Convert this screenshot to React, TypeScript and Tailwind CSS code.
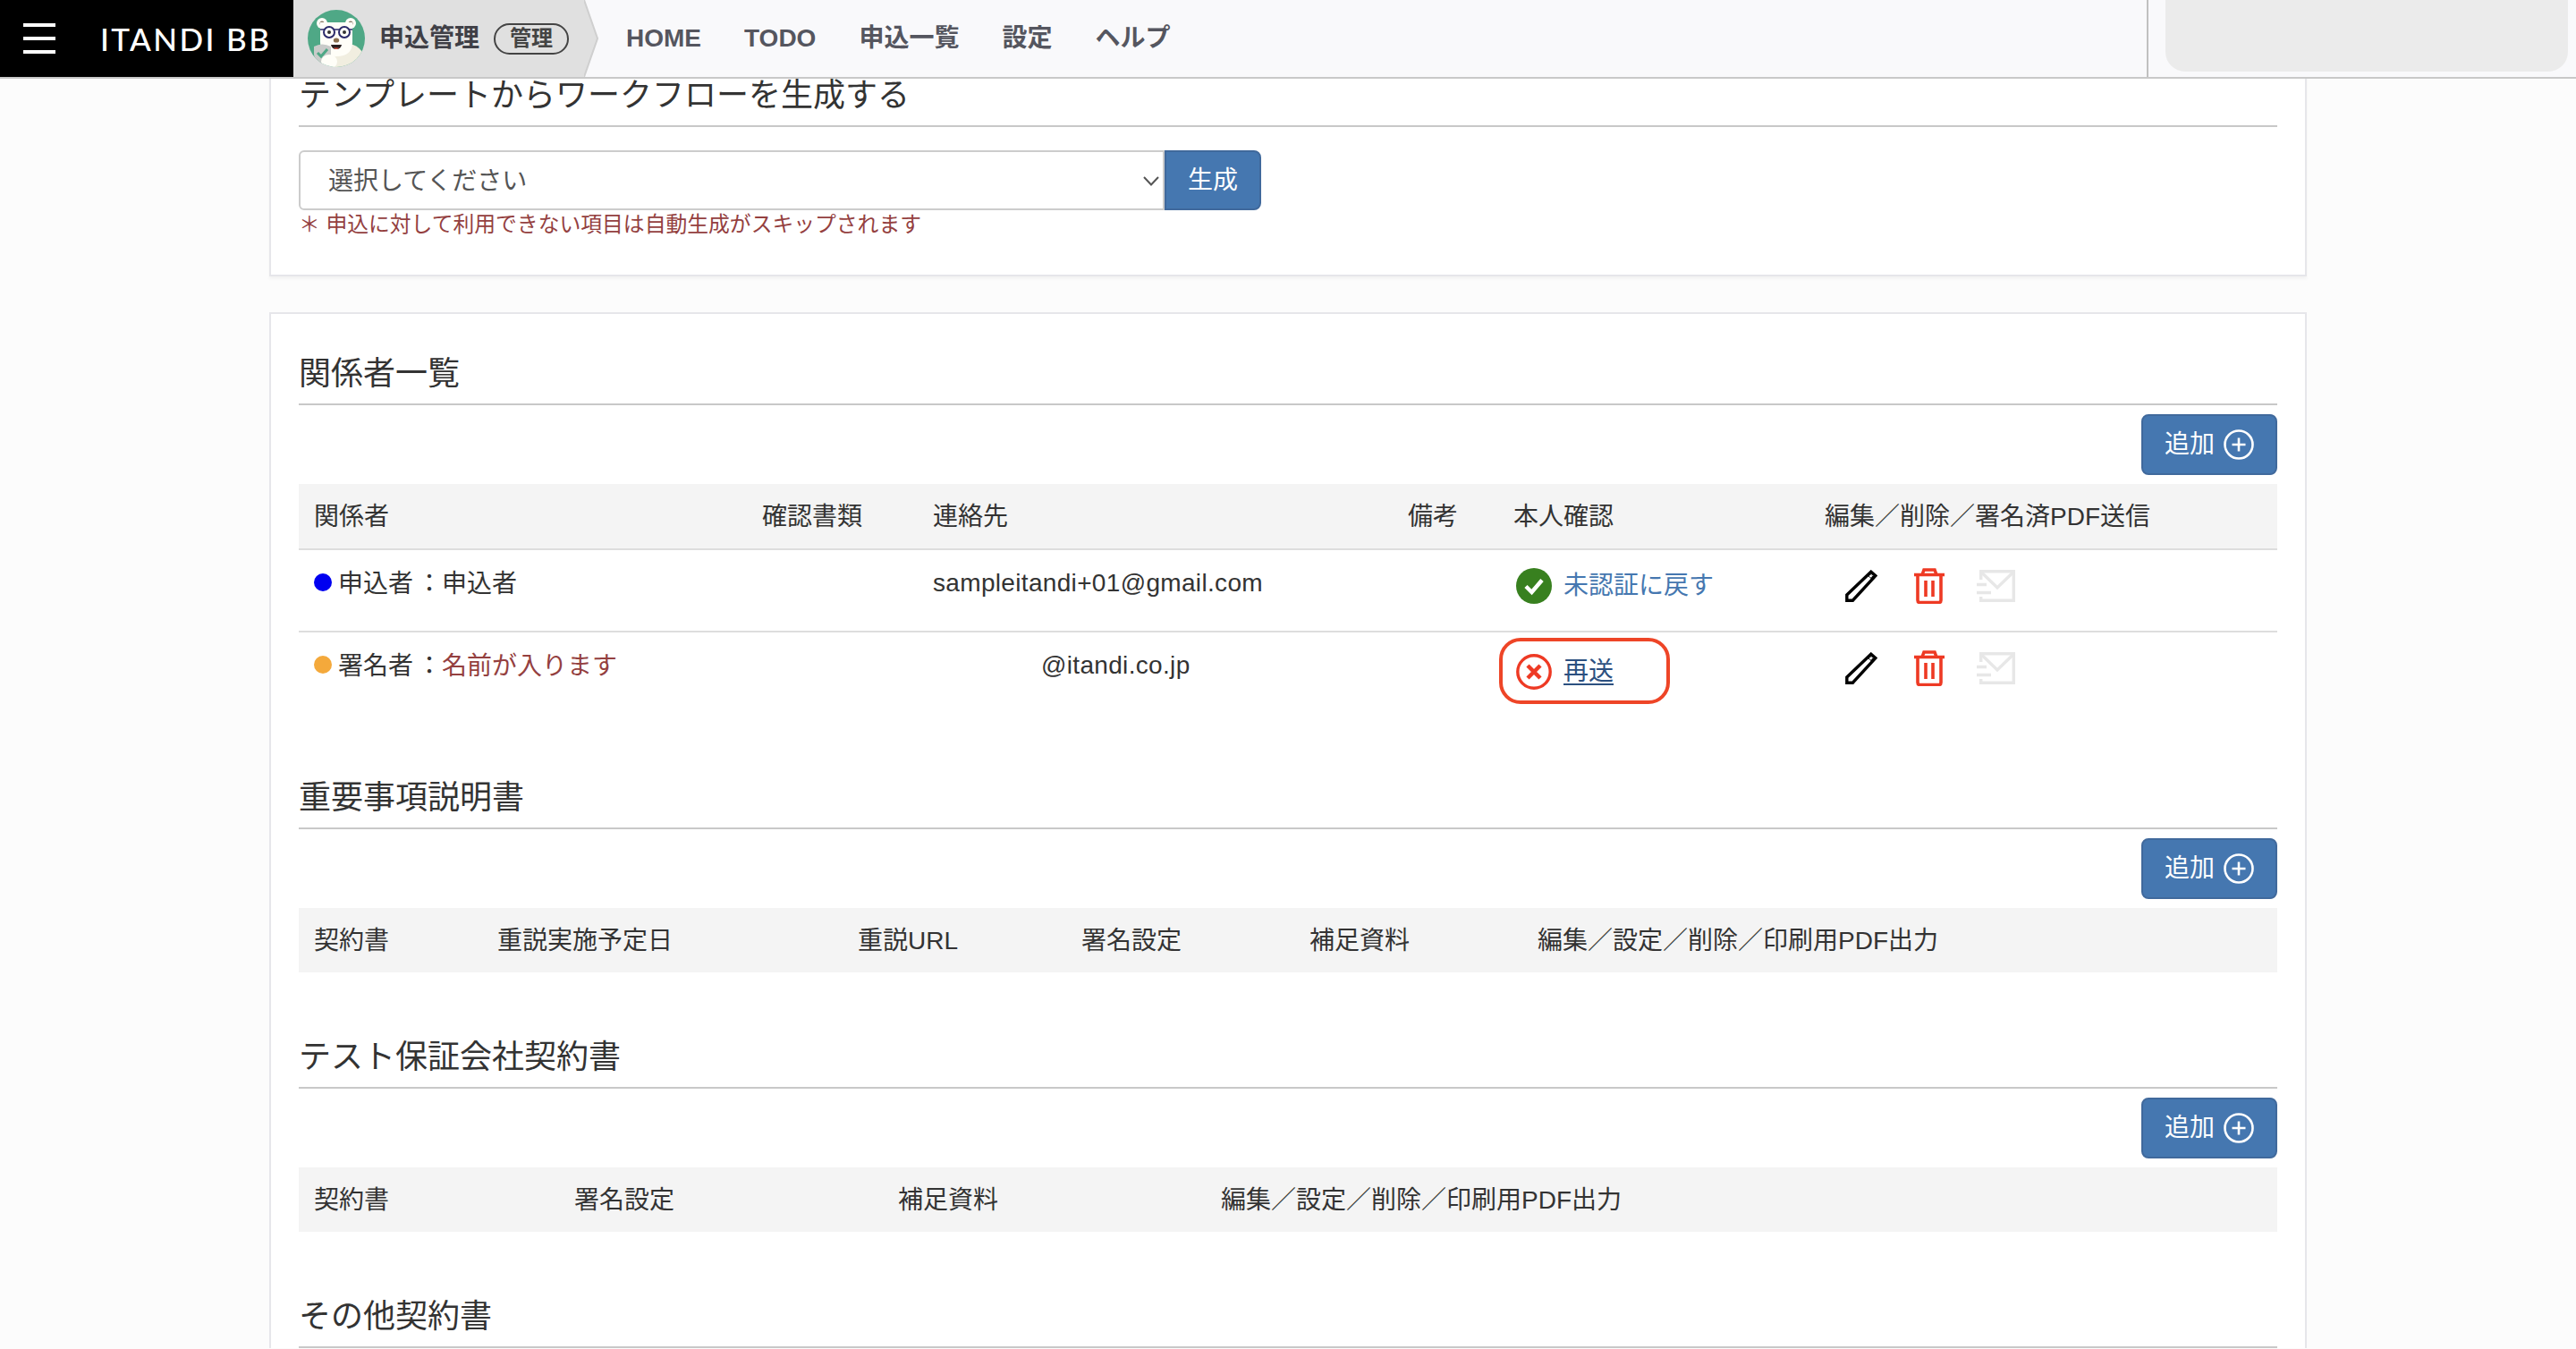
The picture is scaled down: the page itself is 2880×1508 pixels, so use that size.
import type { ReactNode } from "react";

const NAV = ["HOME", "TODO", "申込一覧", "設定", "ヘルプ"];

function BearAvatar() {
  return (
    <svg viewBox="0 0 64 64" className="h-16 w-16 shrink-0">
      <defs>
        <clipPath id="bear-clip">
          <circle cx="32" cy="32" r="32" />
        </clipPath>
      </defs>
      <circle cx="32" cy="32" r="32" fill="#4fa886" />
      <g clipPath="url(#bear-clip)">
        <ellipse cx="44" cy="55" rx="19" ry="17" fill="#f1eee0" />
        <circle cx="16" cy="15" r="6" fill="#fffef8" />
        <circle cx="16" cy="15" r="2.5" fill="#8a7a68" />
        <circle cx="48" cy="15" r="6" fill="#fffef8" />
        <circle cx="48" cy="15" r="2.5" fill="#8a7a68" />
        <path d="M14 14 H50 V36 Q50 52 32 52 Q14 52 14 36 Z" fill="#fffef8" />
        <path d="M14 22 H50" stroke="#2b2a6b" strokeWidth="1.6" />
        <circle cx="24" cy="25" r="6" fill="#fffef8" stroke="#2b2a6b" strokeWidth="2" />
        <circle cx="41" cy="25" r="6" fill="#fffef8" stroke="#2b2a6b" strokeWidth="2" />
        <circle cx="24" cy="25" r="2" fill="#333" />
        <circle cx="41" cy="25" r="2" fill="#333" />
        <ellipse cx="32" cy="34" rx="3.2" ry="2.6" fill="#8a7050" />
        <path d="M26 39 H38 Q37 44 32 44 Q27 44 26 39 Z" fill="#2a2020" />
        <path d="M29 42.5 H35 Q33 44 32 44 Q30 44 29 42.5 Z" fill="#e2533f" />
        <path d="M7 41 Q16 36 26 41 V50 Q24 58 16 61 Q8 58 7 50 Z" fill="#c9cbc9" />
        <path d="M11 48 L15 52 L22 44" fill="none" stroke="#4fa886" strokeWidth="3" />
        <ellipse cx="24" cy="58" rx="9" ry="8" fill="#fffef8" />
      </g>
    </svg>
  );
}

function PlusCircle() {
  return (
    <svg viewBox="0 0 34 34" className="h-[34px] w-[34px]" fill="none" stroke="currentColor" strokeWidth="2.6">
      <circle cx="17" cy="17" r="15.5" />
      <path d="M17 9.5 V24.5 M9.5 17 H24.5" />
    </svg>
  );
}

function CheckBadge() {
  return (
    <svg viewBox="0 0 40 40" className="h-10 w-10 shrink-0">
      <circle cx="20" cy="20" r="20" fill="#38801f" />
      <path d="M11 20.5 L17.5 27 L29 13.5" fill="none" stroke="#fff" strokeWidth="4.5" />
    </svg>
  );
}

function CrossBadge() {
  return (
    <svg viewBox="0 0 40 40" className="h-10 w-10 shrink-0" fill="none" stroke="#ee3a24">
      <circle cx="20" cy="20" r="18.2" strokeWidth="3.4" />
      <path d="M13 13 L27 27 M27 13 L13 27" strokeWidth="4.5" />
    </svg>
  );
}

function PencilIcon() {
  return (
    <svg viewBox="0 0 37 36" className="h-9 w-[37px]" fill="none" stroke="#000" strokeWidth="3.4">
      <path d="M2.8 28 L29.8 2.2 L34.8 6.6 L9.4 34.2 H2.8 Z" />
      <path d="M27.5 3.5 L33.5 8.5 L31 11 L25.5 6 Z" fill="#000" stroke="none" />
      <circle cx="29.5" cy="7" r="1.5" fill="#fff" stroke="none" />
    </svg>
  );
}

function TrashIcon() {
  return (
    <svg viewBox="0 0 36 40" className="h-10 w-9" fill="none" stroke="#ee3a24" strokeWidth="3.6">
      <path d="M1 7.5 H35" />
      <path d="M10 7.5 L12 2 H24 L26 7.5" />
      <path d="M5 7.5 V36 Q5 38.5 7.5 38.5 H28.5 Q31 38.5 31 36 V7.5" />
      <path d="M14 14 V32 M22 14 V32" />
    </svg>
  );
}

function MailIcon() {
  return (
    <svg viewBox="0 0 44 36" className="h-9 w-11" fill="none" stroke="#e7e7e7" strokeWidth="3.4">
      <path d="M4.7 11 V1.7 H41.3 V34.3 H4.7 V30" />
      <path d="M5.5 3 L23 20 L40.5 3" />
      <path d="M0 16.5 H11 M0 25.5 H16" />
    </svg>
  );
}

function Heading({ title }: { title: string }) {
  return (
    <h2 className="border-b-2 border-[#c8c8c8] pb-[7px] pt-[3px] text-[36px] leading-[52px] text-[#333]">{title}</h2>
  );
}

function AddRow() {
  return (
    <div className="mt-[10px] flex justify-end">
      <button
        type="button"
        className="flex h-[68px] w-[152px] items-center justify-center gap-[10px] rounded-lg border-2 border-[#40699c] bg-[#4577b0] text-[28px] text-white"
      >
        追加
        <PlusCircle />
      </button>
    </div>
  );
}

function HeadCells({ labels }: { labels: string[] }) {
  return (
    <>
      {labels.map((label) => (
        <div key={label} className="whitespace-nowrap pt-[2px]">
          {label}
        </div>
      ))}
    </>
  );
}

function EmptyTable({ labels, columns }: { labels: string[]; columns: string }) {
  return (
    <div className={`mt-[10px] grid h-[72px] items-center bg-[#f4f4f4] pl-[17px] text-[28px] text-[#333] ${columns}`}>
      <HeadCells labels={labels} />
    </div>
  );
}

interface PartyRowProps {
  dot: string;
  role: string;
  name: ReactNode;
  contact: ReactNode;
  status: ReactNode;
  rowClass: string;
}

function PartyRow({ dot, role, name, contact, status, rowClass }: PartyRowProps) {
  return (
    <div className={`grid grid-cols-[501px_191px_531px_118px_348px_1fr] items-start pl-[17px] text-[28px] leading-[40px] text-[#333] ${rowClass}`}>
      <div className="col-span-2 flex items-center whitespace-nowrap pt-[18px]">
        <span className={`-mt-[5px] mr-[7px] h-5 w-5 rounded-full ${dot}`} />
        <span>{role}</span>
        <span className="ml-[4px]">：</span>
        {name}
      </div>
      <div className="col-span-2 pt-[17px] tracking-[0.33px]">{contact}</div>
      <div>{status}</div>
      <div className="flex items-center pl-[22px] pt-5">
        <PencilIcon />
        <span className="ml-10">
          <TrashIcon />
        </span>
        <span className="ml-[35px]">
          <MailIcon />
        </span>
      </div>
    </div>
  );
}

export default function App() {
  return (
    <div className="h-[1508px] overflow-hidden bg-[#fcfcfc] [font-family:'Liberation_Sans','Noto_Sans_CJK_JP',sans-serif]">
      <header className="relative z-10 flex h-[88px] border-b-2 border-[#c8c8c8] bg-[#f9f9fb]">
        <div className="flex w-[328px] shrink-0 items-center bg-black pl-[26px] text-white">
          <div className="flex w-9 flex-col gap-[11px]">
            <span className="h-1 bg-white" />
            <span className="h-1 bg-white" />
            <span className="h-1 bg-white" />
          </div>
          <span className="ml-[50px] whitespace-nowrap text-[35px] font-medium tracking-[2.4px] [font-family:Lato,sans-serif]">
            ITANDI BB
          </span>
        </div>
        <div className="relative flex w-[325px] shrink-0 items-center bg-[#e0e0e0] pl-4">
          <BearAvatar />
          <span className="ml-4 text-[28px] font-bold text-[#3f3f46]">申込管理</span>
          <span className="ml-4 flex h-[35px] w-[84px] items-center justify-center rounded-full border-2 border-[#444] text-[24px] font-bold text-[#444]">
            管理
          </span>
          <svg viewBox="0 0 16 86" className="absolute left-full top-0 h-[86px] w-4" preserveAspectRatio="none">
            <path d="M0 0 L15 43 L0 86 Z" fill="#e0e0e0" stroke="none" />
            <path d="M0 0 L15 43 L0 86" fill="none" stroke="#cfcfcf" strokeWidth="2" />
          </svg>
        </div>
        <nav className="ml-[47px] flex items-center gap-[48px] text-[28px] font-bold whitespace-nowrap text-[#55565f]">
          {NAV.map((item) => (
            <span key={item}>{item}</span>
          ))}
        </nav>
        <div className="ml-auto flex w-[480px] shrink-0 border-l-2 border-[#c0c0c0] pl-[19px]">
          <div className="h-20 w-[450px] rounded-b-[22px] bg-[#ebebeb]" />
        </div>
      </header>

      <main className="ml-[301px] w-[2278px]">
        <section className="-mt-[10px] h-[231px] border-2 border-t-0 border-[#e6e6ea] bg-white px-[31px] shadow-[0_3px_3px_rgba(0,0,0,0.04)]">
          <Heading title="テンプレートからワークフローを生成する" />
          <div className="mt-[26px] flex h-[67px]">
            <div className="relative w-[968px]">
              <select className="h-full w-full appearance-none rounded-l-[6px] border-2 border-[#ccc] bg-white pl-[31px] pt-[3px] text-[28px] text-[#555]">
                <option>選択してください</option>
              </select>
              <svg viewBox="0 0 18 11" className="absolute right-[6px] top-[29px] h-[11px] w-[18px]" fill="none" stroke="#555" strokeWidth="2">
                <path d="M1 1 L9 9.5 L17 1" />
              </svg>
            </div>
            <button
              type="button"
              className="h-full w-[108px] rounded-r-lg border-2 border-[#40699c] bg-[#4577b0] text-[28px] text-white"
            >
              生成
            </button>
          </div>
          <p className="mt-[2px] text-[23.8px] leading-[28px] whitespace-nowrap text-[#944040]">
            ＊ 申込に対して利用できない項目は自動生成がスキップされます
          </p>
        </section>

        <section className="mt-[40px] border-2 border-b-0 border-[#e6e6ea] bg-white px-[31px] pt-[38px]">
          <Heading title="関係者一覧" />
          <AddRow />
          <div className="mt-[10px] grid h-[74px] grid-cols-[501px_191px_531px_118px_348px_1fr] items-center border-b-2 border-[#ddd] bg-[#f4f4f4] pl-[17px] text-[28px] text-[#333]">
            <HeadCells labels={["関係者", "確認書類", "連絡先", "備考", "本人確認", "編集／削除／署名済PDF送信"]} />
          </div>
          <PartyRow
            dot="bg-[#0000f0]"
            role="申込者"
            name={<span>申込者</span>}
            contact="sampleitandi+01@gmail.com"
            rowClass="h-[92px] border-b-2 border-[#ddd]"
            status={
              <div className="flex items-center gap-[13px] pl-[3px] pt-5">
                <CheckBadge />
                <a className="text-[#4577b0]">未認証に戻す</a>
              </div>
            }
          />
          <PartyRow
            dot="bg-[#f4a93b]"
            role="署名者"
            name={<span className="text-[#944040]">名前が入ります</span>}
            contact={<span className="pl-[121px]">@itandi.co.jp</span>}
            rowClass="h-[92px]"
            status={
              <div className="relative flex items-center gap-[13px] pl-[3px] pt-6">
                <span className="absolute -left-4 top-[6px] h-[74px] w-[191px] rounded-[24px] border-[4.5px] border-[#ee4527]" />
                <CrossBadge />
                <a className="text-[#2c5080] underline underline-offset-4">再送</a>
              </div>
            }
          />

          <div className="mt-[64px]">
            <Heading title="重要事項説明書" />
          </div>
          <AddRow />
          <EmptyTable
            columns="grid-cols-[205px_403px_250px_255px_255px_1fr]"
            labels={["契約書", "重説実施予定日", "重説URL", "署名設定", "補足資料", "編集／設定／削除／印刷用PDF出力"]}
          />

          <div className="mt-[66px]">
            <Heading title="テスト保証会社契約書" />
          </div>
          <AddRow />
          <EmptyTable
            columns="grid-cols-[291px_362px_361px_1fr]"
            labels={["契約書", "署名設定", "補足資料", "編集／設定／削除／印刷用PDF出力"]}
          />

          <div className="mt-[66px]">
            <Heading title="その他契約書" />
          </div>
        </section>
      </main>
    </div>
  );
}
